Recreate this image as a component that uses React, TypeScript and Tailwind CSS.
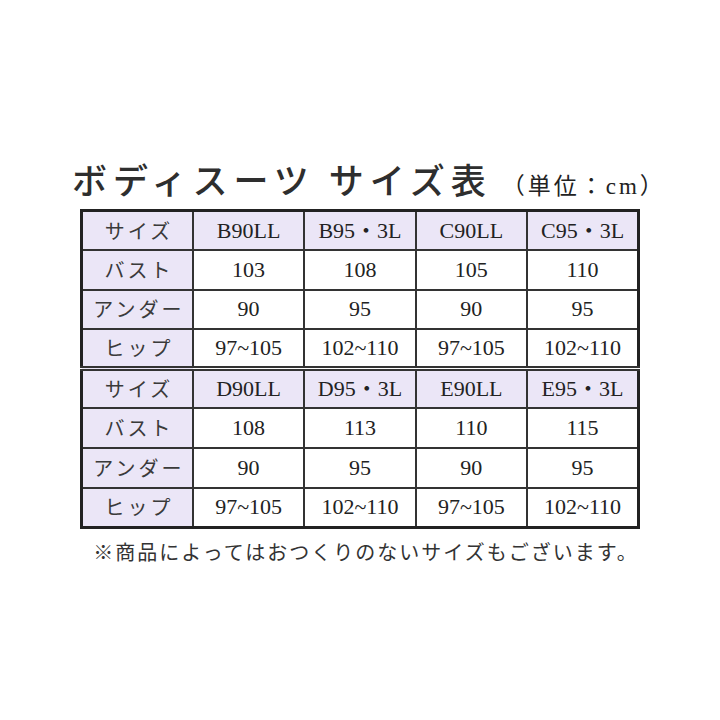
import React from "react";

const SERIF = { fontFamily: '"Liberation Serif", "Noto Sans CJK JP", serif' };

type Block = {
  sizes: string[];
  bust: string[];
  under: string[];
  hip: string[];
};

const BLOCKS: Block[] = [
  {
    sizes: ["B90LL", "B95・3L", "C90LL", "C95・3L"],
    bust: ["103", "108", "105", "110"],
    under: ["90", "95", "90", "95"],
    hip: ["97~105", "102~110", "97~105", "102~110"],
  },
  {
    sizes: ["D90LL", "D95・3L", "E90LL", "E95・3L"],
    bust: ["108", "113", "110", "115"],
    under: ["90", "95", "90", "95"],
    hip: ["97~105", "102~110", "97~105", "102~110"],
  },
];

// label column cell (japanese, spaced)
const Label = ({ text, top }: { text: string; top?: boolean }) => (
  <td
    className={
      "h-[39.6px] border-2 border-[#333] bg-[#ebe6f7] p-0 text-center text-[20px] leading-none tracking-[3px] text-[#3a3a3a] font-['Noto_Sans_CJK_JP',sans-serif] " +
      (top ? "border-t-[5px] border-t-[#333] border-double" : "")
    }
  >
    <span className="pl-[3px]">{text}</span>
  </td>
);

const Cell = ({ text, head, top }: { text: string; head?: boolean; top?: boolean }) => (
  <td
    className={
      "h-[39.6px] border-2 border-[#333] p-0 text-center text-[22px] leading-none text-[#222] " +
      (head ? "bg-[#ebe6f7] " : "bg-white ") +
      (top ? "border-t-[5px] border-t-[#333] border-double" : "")
    }
    style={SERIF}
  >
    {text}
  </td>
);

export default function App() {
  return (
    <div className="flex h-[720px] w-[720px] flex-col items-center bg-white">
      {/* title */}
      <div className="flex items-baseline self-start pl-[72px] pt-[161px]">
        <h1 className="text-[35px] font-medium leading-none tracking-[6px] text-[#2e2e2e] font-['Noto_Sans_CJK_JP',sans-serif]">
          ボディスーツ サイズ表
        </h1>
        <span className="ml-[10px] text-[23px] leading-none tracking-[3px] text-[#222]" style={SERIF}>
          （単位：cm）
        </span>
      </div>

      {/* size table */}
      <table className="mt-[11px] w-[560px] table-fixed border-collapse border-[3px] border-[#222]">
        <tbody>
          {BLOCKS.map((b, bi) => (
            <React.Fragment key={bi}>
              <tr>
                <Label text="サイズ" top={bi > 0} />
                {b.sizes.map((s, i) => (
                  <Cell key={i} text={s} head top={bi > 0} />
                ))}
              </tr>
              <tr>
                <Label text="バスト" />
                {b.bust.map((s, i) => (
                  <Cell key={i} text={s} />
                ))}
              </tr>
              <tr>
                <Label text="アンダー" />
                {b.under.map((s, i) => (
                  <Cell key={i} text={s} />
                ))}
              </tr>
              <tr>
                <Label text="ヒップ" />
                {b.hip.map((s, i) => (
                  <Cell key={i} text={s} />
                ))}
              </tr>
            </React.Fragment>
          ))}
        </tbody>
      </table>

      <p className="ml-[12px] mt-[13px] text-[20px] leading-none tracking-[2px] text-[#333] font-['Noto_Sans_CJK_JP',sans-serif]">
        ※商品によってはおつくりのないサイズもございます。
      </p>
    </div>
  );
}
